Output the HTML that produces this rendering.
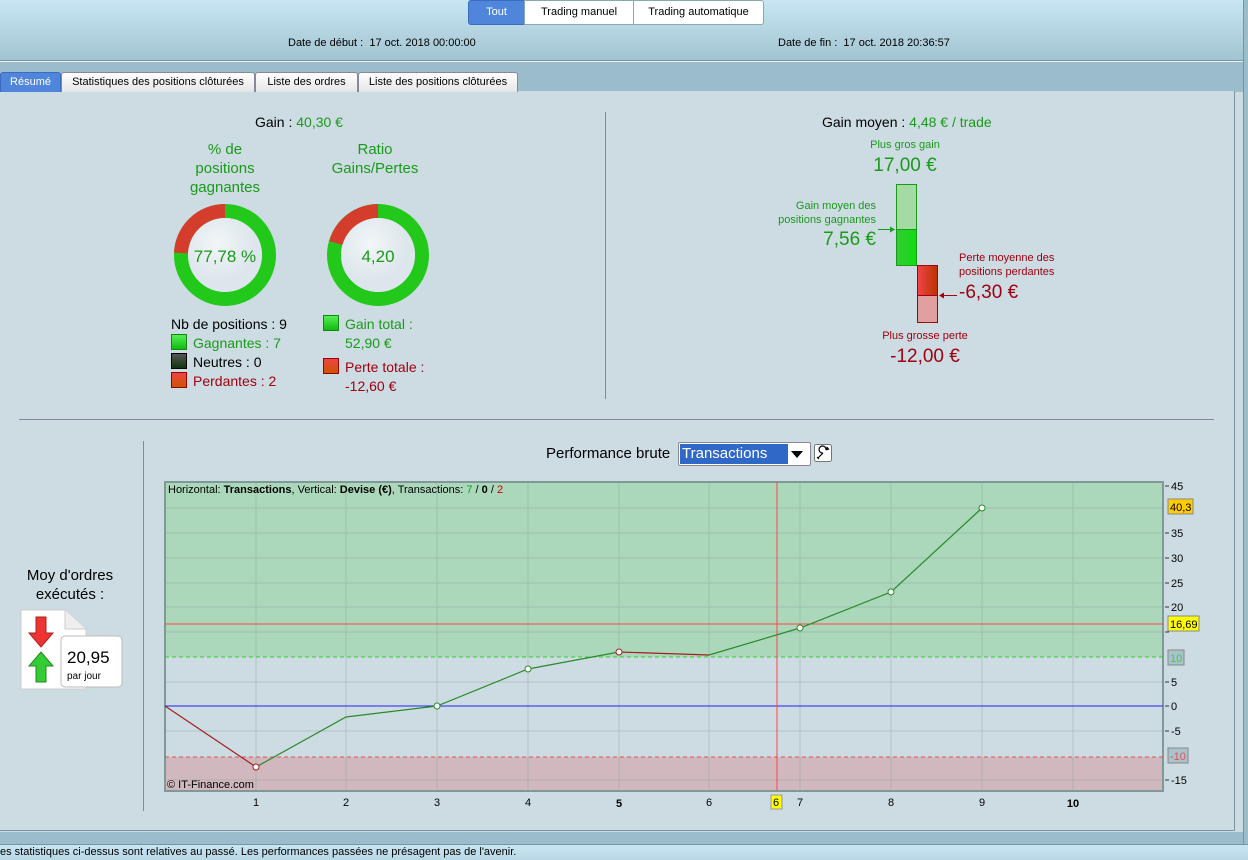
<!DOCTYPE html>
<html><head><meta charset="utf-8"><style>
*{margin:0;padding:0;box-sizing:border-box}
body{width:1248px;height:860px;overflow:hidden;font-family:"Liberation Sans",sans-serif;background:#cddce3;position:relative;font-size:12px}
.a{position:absolute}
.hdr{left:0;top:0;width:1243px;height:60px;background:linear-gradient(#c8e6f3,#a3c4d2)}
.band{left:0;top:62px;width:1243px;height:30px;background:#9bbccb}
.seg{top:0;height:25px;border:1px solid #8aa;background:#fff;font-size:11px;text-align:center;line-height:23px;color:#000}
.tab{top:72px;height:20px;border:1px solid #889;border-bottom:none;background:linear-gradient(#fff,#e6e6e6);font-size:11px;line-height:19px;text-align:center;border-radius:3px 3px 0 0}
.main{left:0;top:91px;width:1235px;height:740px;background:#cddce3;border-right:1px solid #7a95a2;border-bottom:1px solid #7a95a2}
.g{color:#1a9a1a}.r{color:#a00010}
.sq{display:inline-block;width:16px;height:16px;vertical-align:-2px;margin-right:6px;border:1px solid}
</style></head><body>
<div class="a hdr"></div>
<div class="a" style="left:0;top:60px;width:1243px;height:1px;background:#7a95a2"></div>
<div class="a" style="left:0;top:61px;width:1243px;height:1px;background:#e8f4f8"></div>
<div class="a band"></div>
<div class="a" style="left:1243px;top:0;width:5px;height:860px;background:#9bbccb;border-left:1px solid #7a95a2"></div>
<div class="a seg" style="left:468px;width:57px;background:#4f86db;color:#fff;border-color:#3a6cc0;border-radius:3px 0 0 3px">Tout</div>
<div class="a seg" style="left:524px;width:110px">Trading manuel</div>
<div class="a seg" style="left:633px;width:131px;border-radius:0 3px 3px 0">Trading automatique</div>
<div class="a" style="left:288px;top:37px;font-size:11px">Date de début :&nbsp; 17 oct. 2018 00:00:00</div>
<div class="a" style="left:778px;top:37px;font-size:11px">Date de fin :&nbsp; 17 oct. 2018 20:36:57</div>
<div class="a main"></div>
<div class="a tab" style="left:0;width:61px;background:#4f86db;color:#fff;border-color:#3a6cc0">Résumé</div>
<div class="a tab" style="left:61px;width:194px">Statistiques des positions clôturées</div>
<div class="a tab" style="left:255px;width:103px">Liste des ordres</div>
<div class="a tab" style="left:358px;width:160px">Liste des positions clôturées</div>

<div class="a" style="left:255px;top:114px;font-size:14px">Gain : <span class="g">40,30 €</span></div>
<div class="a g" style="left:170px;top:140px;width:110px;text-align:center;font-size:15px;line-height:19px">% de<br>positions<br>gagnantes</div>
<div class="a g" style="left:310px;top:140px;width:130px;text-align:center;font-size:15px;line-height:19px">Ratio<br>Gains/Pertes</div>
<svg class="a" style="left:170px;top:200px" width="270" height="110">
<defs><radialGradient id="c" cx="0.4" cy="0.35"><stop offset="0" stop-color="#f2f6f8"/><stop offset="1" stop-color="#dce6ec"/></radialGradient></defs>
<circle cx="55" cy="55" r="44" fill="none" stroke="#22c81a" stroke-width="14"/>
<path d="M55 11 A44 44 0 0 0 11 53" fill="none" stroke="#d43c2c" stroke-width="14"/>
<circle cx="55" cy="55" r="37" fill="url(#c)"/>
<text x="55" y="62" text-anchor="middle" font-size="17" fill="#1a9a1a" font-family="Liberation Sans">77,78 %</text>
<circle cx="208" cy="55" r="44" fill="none" stroke="#22c81a" stroke-width="14"/>
<path d="M208 11 A44 44 0 0 0 166 43" fill="none" stroke="#d43c2c" stroke-width="14"/>
<circle cx="208" cy="55" r="37" fill="url(#c)"/>
<text x="208" y="62" text-anchor="middle" font-size="17" fill="#1a9a1a" font-family="Liberation Sans">4,20</text>
</svg>
<div class="a" style="left:171px;top:315px;font-size:14px;line-height:19px">Nb de positions : 9<br>
<span class="sq" style="background:linear-gradient(#5e5,#1b1);border-color:#181"></span><span class="g">Gagnantes : 7</span><br>
<span class="sq" style="background:linear-gradient(#555,#131);border-color:#000"></span>Neutres : 0<br>
<span class="sq" style="background:linear-gradient(#e44,#c50);border-color:#900"></span><span class="r">Perdantes : 2</span></div>
<div class="a" style="left:323px;top:315px;font-size:14px;line-height:19px"><span class="sq" style="background:linear-gradient(#5e5,#1b1);border-color:#181"></span><span class="g">Gain total :</span><br><span class="g" style="padding-left:22px">52,90 €</span></div>
<div class="a" style="left:323px;top:358px;font-size:14px;line-height:19px"><span class="sq" style="background:linear-gradient(#e44,#c50);border-color:#900"></span><span class="r">Perte totale :</span><br><span class="r" style="padding-left:22px">-12,60 €</span></div>
<div class="a" style="left:605px;top:112px;width:1px;height:287px;background:#889"></div>

<div class="a" style="left:822px;top:114px;font-size:14px">Gain moyen : <span class="g">4,48 € / trade</span></div>
<div class="a g" style="left:855px;top:139px;width:100px;text-align:center;font-size:11px">Plus gros gain</div>
<div class="a g" style="left:855px;top:155px;width:100px;text-align:center;font-size:19px">17,00 €</div>
<div class="a" style="left:896px;top:184px;width:21px;height:82px;border:1px solid #1a9a1a;background:#a3dba3"></div>
<div class="a" style="left:896px;top:229px;width:21px;height:37px;border:1px solid #1a9a1a;background:linear-gradient(90deg,#3c3,#1d1)"></div>
<div class="a g" style="left:770px;top:199px;width:106px;text-align:right;font-size:11px;line-height:14px">Gain moyen des<br>positions gagnantes</div>
<div class="a g" style="left:800px;top:229px;width:76px;text-align:right;font-size:19px">7,56 €</div>
<svg class="a" style="left:878px;top:225px" width="18" height="9"><path d="M0 4.5H15" stroke="#1a9a1a"/><path d="M12 1.5L17 4.5L12 7.5Z" fill="#1a9a1a"/></svg>
<div class="a" style="left:917px;top:265px;width:21px;height:58px;border:1px solid #a00010;background:#e0a0a0"></div>
<div class="a" style="left:917px;top:265px;width:21px;height:31px;border:1px solid #a00010;background:linear-gradient(90deg,#e44,#b30)"></div>
<svg class="a" style="left:938px;top:291px" width="20" height="9"><path d="M3 4.5H19" stroke="#a00010"/><path d="M6 1.5L1 4.5L6 7.5Z" fill="#a00010"/></svg>
<div class="a r" style="left:959px;top:251px;font-size:11px;line-height:14px">Perte moyenne des<br>positions perdantes</div>
<div class="a r" style="left:959px;top:282px;font-size:19px">-6,30 €</div>
<div class="a r" style="left:870px;top:330px;width:110px;text-align:center;font-size:11px">Plus grosse perte</div>
<div class="a r" style="left:870px;top:346px;width:110px;text-align:center;font-size:19px">-12,00 €</div>

<div class="a" style="left:19px;top:419px;width:1195px;height:1px;background:#889"></div>
<div class="a" style="left:143px;top:441px;width:1px;height:370px;background:#889"></div>
<div class="a" style="left:0;top:566px;width:140px;text-align:center;font-size:15px;line-height:19px">Moy d'ordres<br>exécutés :</div>
<svg class="a" style="left:20px;top:609px" width="104" height="82">
<path d="M1 1 H45 L66 20 V80 H1 Z" fill="#fff" stroke="#ccc"/>
<path d="M45 1 V20 H66" fill="#eee" stroke="#ccc"/>
<path d="M16 8 H26 V24 H33 L21 38 L9 24 H16 Z" fill="#e33" stroke="#a22"/>
<path d="M16 73 H26 V57 H33 L21 43 L9 57 H16 Z" fill="#3c3" stroke="#282"/>
<rect x="41" y="27" width="61" height="51" rx="4" fill="#fff" stroke="#bbb"/>
<text x="47" y="54" font-size="17" font-family="Liberation Sans">20,95</text>
<text x="47" y="70" font-size="10" font-family="Liberation Sans">par jour</text>
</svg>

<div class="a" style="left:546px;top:445px;font-size:15px">Performance brute</div>
<div class="a" style="left:678px;top:442px;width:133px;height:24px;border:1px solid #889;border-radius:2px;background:#fff"></div>
<div class="a" style="left:680px;top:444px;width:108px;height:20px;background:#3068c8;color:#fff;font-size:15px;line-height:20px;padding-left:2px">Transactions</div>
<div class="a" style="left:791px;top:451px;width:0;height:0;border-left:6px solid transparent;border-right:6px solid transparent;border-top:7px solid #000"></div>
<svg class="a" style="left:814px;top:444px" width="18" height="18"><rect x="0.5" y="0.5" width="17" height="17" rx="2" fill="#fff" stroke="#777"/><path d="M4 14 L9 9 M9 9 A3.5 3.5 0 1 1 12 6 L13 3.5 L14.5 5 L12 6" fill="none" stroke="#000" stroke-width="1.2"/><path d="M3 13 L5 15" stroke="#000" stroke-width="1.2"/></svg>

<svg class="a" style="left:160px;top:478px" width="1088" height="340" font-family="Liberation Sans">
<g transform="translate(-160,-478)">
<rect x="165" y="482" width="998" height="309" fill="#cddce3"/>
<rect x="165" y="482" width="998" height="175" fill="#abd8bb"/>
<rect x="165" y="757" width="998" height="34" fill="#d0b8be"/>
<g stroke="#8aa69a" stroke-width="1" opacity=".45">
<path d="M256 482V791M346 482V791M437 482V791M528 482V791M619 482V791M709 482V791M800 482V791M891 482V791M982 482V791M1073 482V791"/>
<path d="M165 508H1163M165 533H1163M165 558H1163M165 583H1163M165 607H1163M165 632H1163M165 682H1163M165 731H1163M165 780H1163"/>
</g>
<rect x="165" y="482" width="998" height="309" fill="none" stroke="#7f9a96" stroke-width="2"/>
<line x1="165" y1="657" x2="1163" y2="657" stroke="#3c3" stroke-dasharray="4,3"/>
<line x1="165" y1="757" x2="1163" y2="757" stroke="#d55" stroke-dasharray="4,3"/>
<line x1="165" y1="706" x2="1163" y2="706" stroke="#22e" />
<line x1="165" y1="624" x2="1163" y2="624" stroke="#f44"/>
<line x1="777" y1="482" x2="777" y2="791" stroke="#f44"/>
<polyline points="165,706 256,767" fill="none" stroke="#a02020" stroke-width="1.2"/>
<polyline points="256,767 346,717 437,706 528,669 619,652" fill="none" stroke="#2a8a2a" stroke-width="1.2"/>
<polyline points="619,652 709,655" fill="none" stroke="#a02020" stroke-width="1.2"/>
<polyline points="709,655 800,628 891,592 982,508" fill="none" stroke="#2a8a2a" stroke-width="1.2"/>
<g fill="#fff" stroke="#2a8a2a"><circle cx="437" cy="706" r="3"/><circle cx="528" cy="669" r="3"/><circle cx="800" cy="628" r="3"/><circle cx="891" cy="592" r="3"/><circle cx="982" cy="508" r="3"/></g>
<g fill="#fff" stroke="#a02020"><circle cx="256" cy="767" r="3"/><circle cx="619" cy="652" r="3"/></g>
<text x="168" y="493" font-size="11">Horizontal: <tspan font-weight="bold">Transactions</tspan>, Vertical: <tspan font-weight="bold">Devise (€)</tspan>, Transactions: <tspan fill="#1a9a1a">7</tspan> / <tspan font-weight="bold">0</tspan> / <tspan fill="#c00">2</tspan></text>
<text x="167" y="788" font-size="11">© IT-Finance.com</text>
<g font-size="11" text-anchor="middle">
<text x="256" y="806">1</text><text x="346" y="806">2</text><text x="437" y="806">3</text><text x="528" y="806">4</text><text x="619" y="807" font-weight="bold">5</text><text x="709" y="806">6</text><text x="800" y="806">7</text><text x="891" y="806">8</text><text x="982" y="806">9</text><text x="1073" y="807" font-weight="bold">10</text>
</g>
<rect x="771" y="795" width="11" height="14" fill="#ff0" stroke="#999"/><text x="776" y="806" font-size="11" text-anchor="middle">6</text>
<g font-size="11" stroke="#333"><path d="M1165 486h4M1165 533h4M1165 558h4M1165 583h4M1165 607h4M1165 632h4M1165 682h4M1165 706h4M1165 731h4M1165 780h4"/></g>
<g font-size="11">
<text x="1171" y="490">45</text><text x="1171" y="537">35</text><text x="1171" y="562">30</text><text x="1171" y="587">25</text><text x="1171" y="611">20</text><text x="1171" y="686">5</text><text x="1171" y="710">0</text><text x="1171" y="735">-5</text><text x="1171" y="784">-15</text>
</g>
<rect x="1168" y="499" width="25" height="15" fill="#fc0" stroke="#888"/><text x="1170" y="511" font-size="11">40,3</text>
<rect x="1168" y="616" width="31" height="15" fill="#ff0" stroke="#888"/><text x="1170" y="628" font-size="11">16,69</text>
<rect x="1168" y="650" width="16" height="15" fill="#a9c2cc" stroke="#888"/><text x="1170" y="662" font-size="11" fill="#4c4">10</text>
<rect x="1168" y="748" width="20" height="15" fill="#a9c2cc" stroke="#888"/><text x="1170" y="760" font-size="11" fill="#d55">-10</text>
</g>
</svg>

<div class="a" style="left:0;top:832px;width:1243px;height:12px;background:#9bbccb"></div>
<div class="a" style="left:0;top:844px;width:1248px;height:16px;background:linear-gradient(#c8e6f3,#b8d6e3);border-top:1px solid #7a95a2;font-size:11px;line-height:15px">es statistiques ci-dessus sont relatives au passé. Les performances passées ne présagent pas de l'avenir.</div>
</body></html>
